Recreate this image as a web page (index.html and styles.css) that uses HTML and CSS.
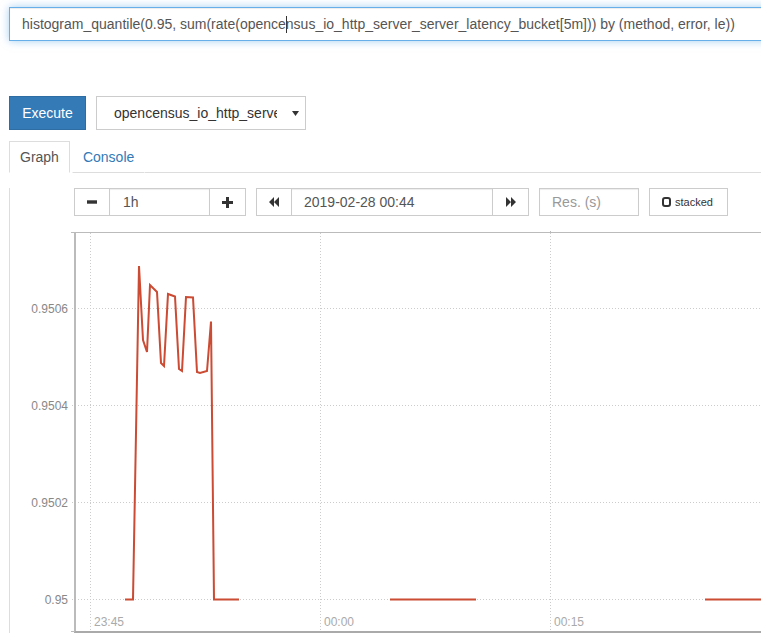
FILE: index.html
```html
<!DOCTYPE html>
<html>
<head>
<meta charset="utf-8">
<link rel="stylesheet" href="styles.css">
</head>
<body>
<div class="query">histogram_quantile(0.95, sum(rate(opence<span class="cursor"></span>nsus_io_http_server_server_latency_bucket[5m])) by (method, error, le))</div>

<div class="actions">
  <button class="btn-execute">Execute</button>
  <div class="metric-select">
    <span class="metric-text">opencensus_io_http_server_server_latency_bucket</span>
    <svg class="select-arrow" width="7" height="5" viewBox="0 0 7 5"><path d="M0 0H7L3.5 5Z" fill="#333"/></svg>
  </div>
</div>

<div class="tabs">
  <div class="tab active">Graph</div>
  <div class="tab">Console</div>
  <div class="tab-fill"></div>
</div>

<div class="tab-content">
  <div class="controls">
    <div class="group">
      <div class="gbtn"><svg width="10" height="4" viewBox="0 0 10 4"><rect width="10" height="3.4" y="0.3" fill="#333"/></svg></div>
      <div class="ginput range">1h</div>
      <div class="gbtn"><svg width="11" height="11" viewBox="0 0 11 11"><path d="M4 0H7V4H11V7H7V11H4V7H0V4H4Z" fill="#333"/></svg></div>
    </div>
    <div class="group">
      <div class="gbtn"><svg width="10" height="10" viewBox="0 0 10 10"><path d="M0 5L5 0V10Z M5 5L10 0V10Z" fill="#333"/></svg></div>
      <div class="ginput date">2019-02-28 00:44</div>
      <div class="gbtn"><svg width="10" height="10" viewBox="0 0 10 10"><path d="M10 5L5 0V10Z M5 5L0 0V10Z" fill="#333"/></svg></div>
    </div>
    <div class="res">Res. (s)</div>
    <div class="stacked"><span class="box"></span>stacked</div>
  </div>

  <svg class="chart" width="751" height="407" viewBox="10 226 751 407">
    <g class="grid">
      <line x1="72" y1="308.5" x2="761" y2="308.5"/>
      <line x1="72" y1="405.5" x2="761" y2="405.5"/>
      <line x1="72" y1="502.5" x2="761" y2="502.5"/>
      <line x1="72" y1="599.5" x2="761" y2="599.5"/>
      <line x1="90.5" y1="233" x2="90.5" y2="633"/>
      <line x1="320.5" y1="233" x2="320.5" y2="633"/>
      <line x1="550.5" y1="233" x2="550.5" y2="633"/>
    </g>
    <line x1="71" y1="232.5" x2="761" y2="232.5" stroke="#bbb" stroke-width="1"/>
    <line x1="550.5" y1="231" x2="550.5" y2="233" stroke="#bbb" stroke-width="1"/>
    <rect x="74" y="232" width="2" height="401" fill="#bbb"/>
    <rect x="74" y="631" width="687" height="2" fill="#aaa"/>
    <line x1="71" y1="631.5" x2="75" y2="631.5" stroke="#bbb" stroke-width="1"/>
    <g class="ylab">
      <text x="68" y="313">0.9506</text>
      <text x="68" y="410">0.9504</text>
      <text x="68" y="506.5">0.9502</text>
      <text x="68" y="603.5">0.95</text>
    </g>
    <g class="xlab">
      <text x="94" y="626">23:45</text>
      <text x="324" y="626">00:00</text>
      <text x="554" y="626">00:15</text>
    </g>
    <g class="series">
      <polyline points="125,599.5 133,599.5 139,266 143,340 147,352 150,285 157,292 161,363 164,366 168,294 175,296.5 179,369 182,371 186,297 193,297.5 197,372 200,373 207,371 211,321.5 214,599.5 239,599.5"/>
      <polyline points="390,599.5 476,599.5"/>
      <polyline points="705,599.5 761,599.5"/>
    </g>
  </svg>
</div>
</body>
</html>
```

FILE: styles.css
```css
html, body {
  margin: 0;
  padding: 0;
  overflow: hidden;
  background: #fff;
}

body {
  font-family: "Liberation Sans", Arial, sans-serif;
  font-size: 14px;
  color: #333;
  width: 761px;
  height: 633px;
}

.query {
  box-sizing: border-box;
  margin: 7px 0 0 9px;
  width: 800px;
  height: 34px;
  padding: 0 12px;
  line-height: 32px;
  white-space: nowrap;
  color: #555;
  border: 1px solid #66afe9;
  box-shadow: inset 0 1px 1px rgba(0,0,0,.075), 0 0 8px rgba(102,175,233,.6);
}

.cursor {
  display: inline-block;
  width: 1px;
  height: 17px;
  margin-right: -1px;
  vertical-align: -4px;
  background: #333;
}

.actions {
  display: flex;
  gap: 10px;
  margin: 55px 0 0 9px;
}

.btn-execute {
  box-sizing: border-box;
  width: 77px;
  height: 34px;
  padding: 0;
  font-family: inherit;
  font-size: 14px;
  color: #fff;
  background: #337ab7;
  border: 1px solid #2e6da4;
  border-radius: 0;
}

.metric-select {
  box-sizing: border-box;
  width: 210px;
  height: 34px;
  display: flex;
  align-items: center;
  padding: 0 6px 0 17px;
  border: 1px solid #ccc;
  color: #333;
}

.metric-text {
  flex: 0 0 163px;
  overflow: hidden;
  white-space: nowrap;
}

.select-arrow {
  margin-left: auto;
  margin-top: 1px;
}

.tabs {
  display: flex;
  margin: 11px 0 0 9px;
  height: 32px;
}

.tab {
  box-sizing: border-box;
  height: 32px;
  padding: 0 10px;
  line-height: 30px;
  margin-right: 2px;
  border: 1px solid transparent;
  border-bottom: 1px solid #ddd;
  color: #337ab7;
}

.tab.active {
  color: #555;
  border-color: #ddd;
  border-bottom-color: #fff;
}

.tab-fill {
  flex: 1;
  border-bottom: 1px solid #ddd;
  margin-left: -2px;
}

.tab-content {
  margin-left: 9px;
  border-left: 1px solid #ddd;
  height: 460px;
}

.controls {
  display: flex;
  gap: 10px;
  margin: 15px 0 0 64px;
  height: 28px;
}

.group {
  display: flex;
}

.gbtn {
  box-sizing: border-box;
  width: 37px;
  height: 28px;
  display: flex;
  align-items: center;
  justify-content: center;
  border: 1px solid #ccc;
  background: #fff;
}

.group .gbtn:first-child {
  width: 36px;
}

.ginput {
  box-sizing: border-box;
  height: 28px;
  line-height: 26px;
  padding: 0 13px;
  border-top: 1px solid #ccc;
  border-bottom: 1px solid #ccc;
  color: #555;
  box-shadow: inset 0 1px 1px rgba(0,0,0,.075);
}

.ginput.range {
  width: 99px;
}

.ginput.date {
  width: 200px;
  padding-left: 12px;
}

.res {
  box-sizing: border-box;
  width: 100px;
  height: 28px;
  line-height: 26px;
  padding: 0 12px;
  border: 1px solid #ccc;
  color: #999;
  box-shadow: inset 0 1px 1px rgba(0,0,0,.075);
}

.stacked {
  box-sizing: border-box;
  width: 79px;
  height: 28px;
  display: flex;
  align-items: center;
  padding-left: 12px;
  border: 1px solid #ccc;
  font-size: 11px;
  color: #333;
}

.box {
  box-sizing: border-box;
  width: 9px;
  height: 10px;
  border: 2px solid #333;
  border-radius: 3px;
  margin-right: 4px;
}

.chart {
  display: block;
  margin-top: 10px;
}

.grid line {
  stroke: #ccc;
  stroke-width: 1;
  stroke-dasharray: 1 2;
}

.ylab text {
  font-family: "Liberation Sans", Arial, sans-serif;
  font-size: 12px;
  fill: #888;
  text-anchor: end;
}

.xlab text {
  font-family: "Liberation Sans", Arial, sans-serif;
  font-size: 12px;
  fill: #aaa;
}

.series polyline {
  fill: none;
  stroke: #cb4b33;
  stroke-width: 2;
  stroke-linejoin: miter;
}
```
